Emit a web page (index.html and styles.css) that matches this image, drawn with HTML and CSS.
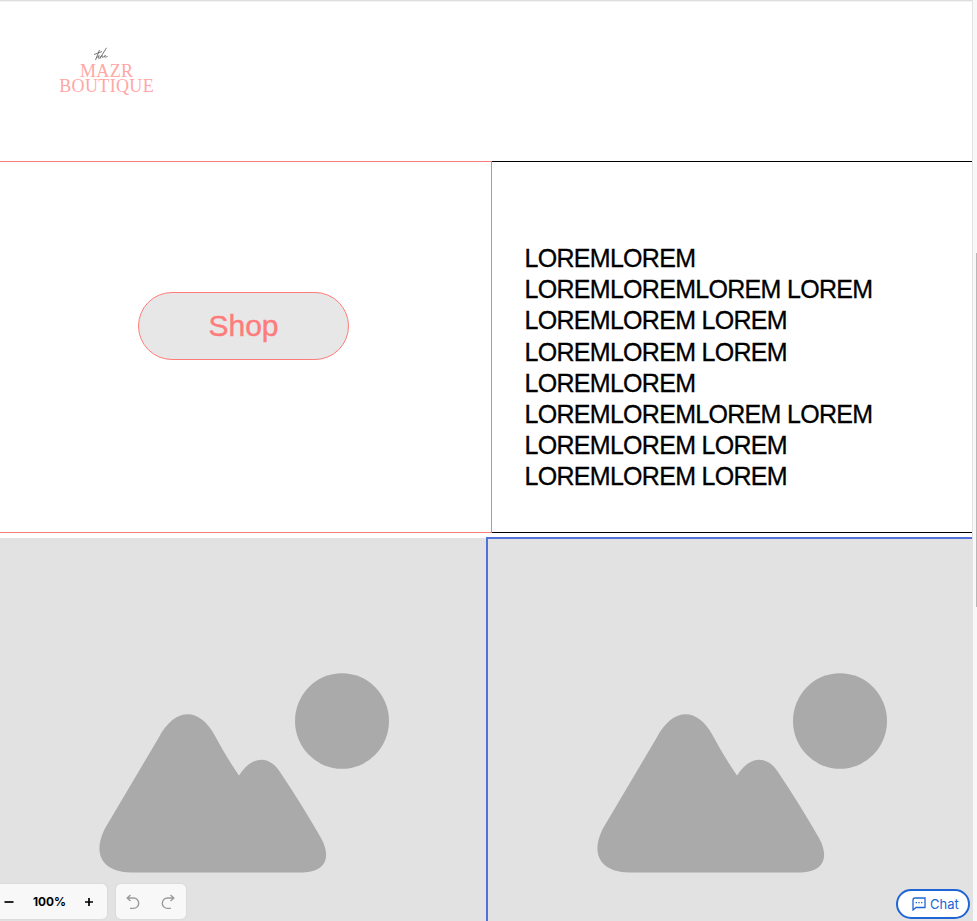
FILE: index.html
```
<!DOCTYPE html>
<html lang="en">
<head>
<meta charset="utf-8">
<title>Mazr Boutique</title>
<link rel="stylesheet" href="styles.css">
</head>
<body>
<div class="editor">
  <main class="canvas">
    <header class="header">
      <div class="logo">
        <svg class="script" width="16" height="15" viewBox="0 0 16 15"><path d="M6.500 3 2.500 13M1 7.500 9 4.500M3.500 11 6 8.500 5.500 11.500M13.500 .8 6.800 11.500C8 9 9.600 7.500 9.200 9.500c-.2 1.500.9 1.200 2-.3 1-1.300 2-1 .6.100-1 1.200.7 1 2.800.1"/></svg>
        <span>MAZR</span>
        <span>BOUTIQUE</span>
      </div>
    </header>
    <section class="intro">
      <div class="cta"><button class="shop">Shop</button></div>
      <p class="copy">LOREMLOREM<br>LOREMLOREMLOREM LOREM<br>LOREMLOREM LOREM<br>LOREMLOREM LOREM<br>LOREMLOREM<br>LOREMLOREMLOREM LOREM<br>LOREMLOREM LOREM<br>LOREMLOREM LOREM</p>
    </section>
    <section class="gallery">
      <div class="tile">
        <svg class="placeholder" width="292" height="202" viewBox="98 672 292 202"><ellipse cx="342" cy="721" rx="47" ry="47.8"/><path d="M131 872.5C103 872 94 855 102.500 834C103.500 831 105 828 107 825L158.500 738C175 707 199 707 214.500 735C222 749 231 764 239 775.500C252 755 269 755 280 772C295 794 309 817 321 838C332 858 325 872 303 872.5Z"/></svg>
      </div>
      <div class="tile selected">
        <svg class="placeholder" width="292" height="202" viewBox="98 672 292 202"><ellipse cx="342" cy="721" rx="47" ry="47.8"/><path d="M131 872.5C103 872 94 855 102.500 834C103.500 831 105 828 107 825L158.500 738C175 707 199 707 214.500 735C222 749 231 764 239 775.500C252 755 269 755 280 772C295 794 309 817 321 838C332 858 325 872 303 872.5Z"/></svg>
      </div>
    </section>
  </main>
  <aside class="scroll"><div class="thumb"></div></aside>
  <div class="toolbar">
    <div class="panel zoom">
      <svg width="10" height="10" viewBox="0 0 10 10"><path d="M.5 5h9"/></svg>
      <span>100%</span>
      <svg width="8" height="8" viewBox="0 0 8 8"><path d="M0 4h8M4 0v8"/></svg>
    </div>
    <div class="panel history">
      <svg width="14" height="16" viewBox="0 0 14 16"><path d="M4.5 1 1.2 4 4.5 7M1.2 4H7.500a5.200 5.200 0 0 1 0 10.400H4"/></svg>
      <svg width="14" height="16" viewBox="0 0 14 16"><path d="M9.500 1 12.800 4 9.500 7M12.800 4H6.500a5.200 5.200 0 0 0 0 10.400H10"/></svg>
    </div>
  </div>
  <button class="chat">
    <svg width="14" height="14" viewBox="0 0 14 14"><path d="M3 1h10v9.500H4L1 13V3a2 2 0 0 1 2-2Z"/><path d="M3.600 5.700h1.400M6.300 5.700h1.400M9 5.700h1.400"/></svg>
    <span>Chat</span>
  </button>
</div>
</body>
</html>
```
FILE: styles.css
```
* { box-sizing: border-box; }
body { margin: 0; background: #fff; font-family: "Liberation Sans", Arial, sans-serif; }
button { font: inherit; padding: 0; }
.editor { display: flex; position: relative; height: 921px; overflow: hidden; }
.canvas { width: 972px; border-top: 1px solid #dedede; box-shadow: inset 0 1px #f3f3f3; }
.header { height: 160px; padding: 46px 0 0 56px; }
.logo { width: 101px; display: flex; flex-direction: column; align-items: center; font-family: "Liberation Serif", serif; font-size: 18px; line-height: 15px; letter-spacing: .35px; color: #ffa7a4; }
.logo span { margin-right: -.35px; }
.script { fill: none; stroke: #555; stroke-width: .8; margin-right: 12px; margin-bottom: 2px; }
.intro { display: grid; grid-template-columns: 492px 480px; height: 372px; }
.cta { border: solid #f87c79; border-width: 1px 1px 1px 0; padding: 130px 0 0 138px; }
.shop { display: block; width: 211px; height: 68px; border: 1px solid #ff7c7a; border-radius: 34px; background: #e7e7e7; color: #ff7c7a; font-size: 30px; line-height: 66px; -webkit-text-stroke: .4px; }
.copy { margin: 0; border: solid #000; border-width: 1px 0; padding: 81px 0 0 32.500px; font-size: 25px; line-height: 31.2px; letter-spacing: -.7px; color: #000; -webkit-text-stroke: .3px; }
.gallery { display: grid; grid-template-columns: 486px 486px; height: 384px; margin-top: 4px; }
.tile { margin-top: 1px; background: #e2e2e2; padding: 134px 0 0 98px; }
.tile.selected { margin-top: 0; border: solid #5072da; border-width: 2px 0 0 2px; padding: 133px 0 0 108.400px; }
.placeholder { display: block; fill: #aaa; }
.scroll { width: 5px; background: #f8f8f8; border-left: 1px solid #e3e3e3; padding: 253px 0 0 3px; }
.thumb { width: 1px; height: 354px; background: #b8b8b8; }
.toolbar { position: absolute; left: -8px; bottom: 2px; display: flex; gap: 9px; }
.panel { height: 35px; display: flex; align-items: center; background: #f8f8f8; border-radius: 5px; box-shadow: 0 0 2px #ccc; }
.zoom { width: 115px; padding-left: 12px; font: bold 11.800px Inter, sans-serif; color: #000; }
.zoom svg { stroke: #000; stroke-width: 1.700; }
.zoom span { margin: 0 19px 0 19px; width: 33px; white-space: nowrap; }
.history { width: 70px; justify-content: space-between; padding: 0 11px 0 10px; }
.history svg { fill: none; stroke: #9b9b9b; stroke-width: 1.400; }
.chat { position: absolute; left: 896px; top: 889px; width: 74px; height: 30px; display: flex; align-items: center; gap: 4px; padding-left: 14px; border: 2px solid #2065d5; border-radius: 15px; background: #fff; color: #2065d5; font: 13px Inter, sans-serif; }
.chat svg { fill: none; stroke: #2065d5; stroke-width: 1.300; }
```
